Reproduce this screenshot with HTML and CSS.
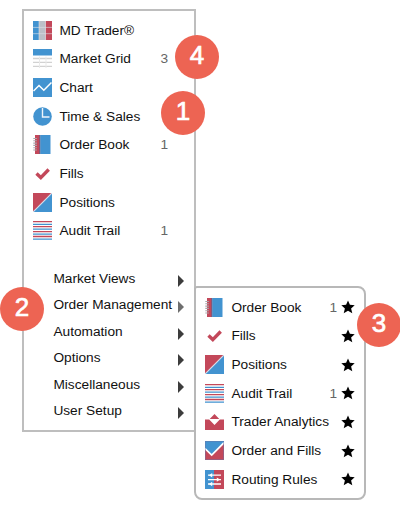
FILE: index.html
```html
<!DOCTYPE html>
<html lang="en">
<head>
    <meta charset="UTF-8">
    <meta name="viewport" content="width=device-width, initial-scale=1.0">
    <title>Widgets Menu</title>
    <link rel="stylesheet" href="styles.css">
</head>
<body>
    <!-- Icons shared by both menus -->
    <svg class="sprite" width="0" height="0">
        <symbol id="trader" viewBox="0 0 19 19">
            <path fill="#4293d0" d="M0 0h6v19H0z"/>
            <path fill="#bcc0c8" d="M6 0h6.5v19H6z"/>
            <path fill="#c3485a" d="M12.5 0H19v19h-6.5z"/>
            <path stroke="#dfe2e8" stroke-width=".6" d="M0 6.4h19M0 12.7h19M6 0v19M12.5 0v19"/>
        </symbol>
        <symbol id="grid" viewBox="0 0 19 19">
            <path fill="#4293d0" d="M0 0h19v6.5H0z"/>
            <path stroke="#d2d2d2" stroke-width="1.3" d="M0 9.5h19M0 13.3h19M0 17.3h19"/>
            <path stroke="#e9e9e9" d="M6.5 7.5V19M13 7.5V19"/>
        </symbol>
        <symbol id="chart" viewBox="0 0 19 19">
            <path fill="#4293d0" d="M0 0h19v19H0z"/>
            <path fill="none" stroke="#fff" stroke-width="1.5" d="M.5 13 6 7.5l4.8 4.8L18.5 4.5"/>
        </symbol>
        <symbol id="clock" viewBox="0 0 19 19">
            <circle cx="9.5" cy="9.5" r="9.3" fill="#4293d0"/>
            <path fill="none" stroke="#eef5fb" stroke-width="1.4" d="M9.5 1v9h7"/>
        </symbol>
        <symbol id="book" viewBox="0 0 19 19">
            <path fill="#c3485a" d="M2 0h5v19H2z"/>
            <path fill="#4a6495" d="M6.5 0h1.2v19H6.5z"/>
            <path fill="#4293d0" d="M7.5 0h10v19h-10z"/>
            <path stroke="#aaa4aa" stroke-width="1.1" d="M.3 3.5h3.6M.3 5.8h3.6M.3 8.1h3.6M.3 10.4h3.6M.3 12.7h3.6M.3 15h3.6"/>
        </symbol>
        <symbol id="check" viewBox="0 0 19 19">
            <path fill="none" stroke="#c3485a" stroke-width="3.4" d="m3.5 9.6 4.3 4L15.7 5.5"/>
        </symbol>
        <symbol id="positions" viewBox="0 0 19 19">
            <path fill="#c3485a" d="M0 0h19L0 19z"/>
            <path fill="#4293d0" d="M19 0v19H0z"/>
            <path stroke="#d5dce8" stroke-width="1.2" d="M0 19 19 0"/>
        </symbol>
        <symbol id="audit" viewBox="0 0 19 19">
            <path stroke="#c3485a" stroke-width="1.3" d="M0 .7h19M0 5.7h19M0 10.7h19M0 15.5h19"/>
            <path stroke="#4293d0" stroke-width="1.3" d="M0 3.3h19M0 8.2h19M0 13.1h19M0 18.2h19"/>
        </symbol>
        <symbol id="analytics" viewBox="0 0 19 19">
            <path fill="#c3485a" d="M0 7.5h4.2l5.3 5.5 5.3-5.5H19V18H0zM9.5 2l4.8 5H4.7z"/>
        </symbol>
        <symbol id="orderfills" viewBox="0 0 19 19">
            <path fill="#4293d0" d="M0 0h19v2L7 14 0 7z"/>
            <path fill="#c3485a" d="M0 8l7 6L19 2v17H0z"/>
            <path fill="none" stroke="#fff" stroke-width="1.7" d="m0 7.5 6.7 6.6L19 1.7"/>
            <path fill="none" stroke="#6976a8" stroke-width=".6" d="M.3.3h18.4v18.4H.3z"/>
        </symbol>
        <symbol id="routing" viewBox="0 0 19 19">
            <path fill="#4293d0" d="M0 0h9v19H0z"/>
            <path fill="#c3485a" d="M9 0h10v19H9z"/>
            <path stroke="#fff" stroke-width="1.3" d="M3 5.2h13M3 9.6h13M3 14h13"/>
            <path fill="#fff" d="M4 5.2 7.2 3v4.4zM15 9.6l-3.2-2.2v4.4zM4 14l3.2-2.2v4.4z"/>
        </symbol>
        <symbol id="star" viewBox="0 0 14 14">
            <path d="M7 .4l1.9 4.4 4.8.4-3.6 3.2 1.2 4.9L7 10.7l-4.3 2.6 1.2-4.9L.3 5.2l4.8-.4z"/>
        </symbol>
    </svg>

    <div class="menu">
        <ul class="widgets">
            <li><svg class="icon"><use href="#trader"/></svg><span class="name">MD Trader®</span></li>
            <li><svg class="icon"><use href="#grid"/></svg><span class="name">Market Grid</span><span class="count">3</span></li>
            <li><svg class="icon"><use href="#chart"/></svg><span class="name">Chart</span></li>
            <li><svg class="icon"><use href="#clock"/></svg><span class="name">Time &amp; Sales</span></li>
            <li><svg class="icon"><use href="#book"/></svg><span class="name">Order Book</span><span class="count">1</span></li>
            <li><svg class="icon"><use href="#check"/></svg><span class="name">Fills</span></li>
            <li><svg class="icon"><use href="#positions"/></svg><span class="name">Positions</span></li>
            <li><svg class="icon"><use href="#audit"/></svg><span class="name">Audit Trail</span><span class="count">1</span></li>
        </ul>
        <ul class="categories">
            <li>Market Views<span class="arrow"></span></li>
            <li class="active">Order Management<span class="arrow"></span></li>
            <li>Automation<span class="arrow"></span></li>
            <li>Options<span class="arrow"></span></li>
            <li>Miscellaneous<span class="arrow"></span></li>
            <li>User Setup<span class="arrow"></span></li>
        </ul>
    </div>

    <div class="submenu">
        <ul class="widgets">
            <li><svg class="icon"><use href="#book"/></svg><span class="name">Order Book</span><span class="count">1</span><svg class="star"><use href="#star"/></svg></li>
            <li><svg class="icon"><use href="#check"/></svg><span class="name">Fills</span><svg class="star"><use href="#star"/></svg></li>
            <li><svg class="icon"><use href="#positions"/></svg><span class="name">Positions</span><svg class="star"><use href="#star"/></svg></li>
            <li><svg class="icon"><use href="#audit"/></svg><span class="name">Audit Trail</span><span class="count">1</span><svg class="star"><use href="#star"/></svg></li>
            <li><svg class="icon"><use href="#analytics"/></svg><span class="name">Trader Analytics</span><svg class="star"><use href="#star"/></svg></li>
            <li><svg class="icon"><use href="#orderfills"/></svg><span class="name">Order and Fills</span><svg class="star"><use href="#star"/></svg></li>
            <li><svg class="icon"><use href="#routing"/></svg><span class="name">Routing Rules</span><svg class="star"><use href="#star"/></svg></li>
        </ul>
    </div>

    <!-- Numbered callouts -->
    <div class="badge badge-1">1</div>
    <div class="badge badge-2">2</div>
    <div class="badge badge-3">3</div>
    <div class="badge badge-4">4</div>
</body>
</html>
```
FILE: styles.css
```css
* {
    box-sizing: border-box;
}
body {
    position: relative;
    margin: 0;
    padding: 9px 0 0 22px;
    height: 523px;
    overflow: hidden;
    background: #fff;
    color: #111;
    font-family: "Liberation Sans", Arial, sans-serif;
    font-size: 13.7px;
}
ul {
    list-style: none;
    margin: 0;
    padding: 0;
}
.sprite {
    position: absolute;
}
.menu {
    width: 174px;
    height: 423px;
    padding: 5px 0 0 9px;
    border: 2px solid #bebebe;
}

/* Icon rows */
.widgets li {
    display: flex;
    align-items: center;
    height: 28.65px;
    white-space: nowrap;
}
.icon {
    flex: none;
    width: 19px;
    height: 19px;
    margin-right: 7.4px;
}
.name {
    flex: 1;
}
.count {
    color: #666;
}
.menu .count {
    margin-right: 26px;
}

/* Category rows */
.categories {
    margin: 20px 10px 0 20.4px;
}
.categories li {
    display: flex;
    align-items: center;
    justify-content: space-between;
    height: 26.5px;
    white-space: nowrap;
}
.arrow {
    margin-top: 5px;
    border-left: 6px solid #3c3c3c;
    border-top: 6px solid transparent;
    border-bottom: 6px solid transparent;
}
.active .arrow {
    border-left-color: #6e6e6e;
}

.submenu {
    position: absolute;
    left: 194px;
    top: 286px;
    width: 172px;
    height: 214px;
    padding: 5px 9px 0;
    background: #fff;
    border: 2px solid #b8b8b8;
    border-radius: 3px 8px 8px 8px;
}
.star {
    flex: none;
    width: 14px;
    height: 14px;
    margin-left: 4px;
}

/* Callouts over the menus */
.badge {
    position: absolute;
    width: 44px;
    height: 44px;
    border-radius: 50%;
    background: #ed6453;
    color: #fff;
    font-size: 26px;
    line-height: 40px;
    text-align: center;
    -webkit-text-stroke: 0.7px #fff;
}
.badge-1 {
    left: 161px;
    top: 91px;
}
.badge-2 {
    left: 0;
    top: 287px;
}
.badge-3 {
    left: 357px;
    top: 303px;
}
.badge-4 {
    left: 175px;
    top: 35px;
}
```
